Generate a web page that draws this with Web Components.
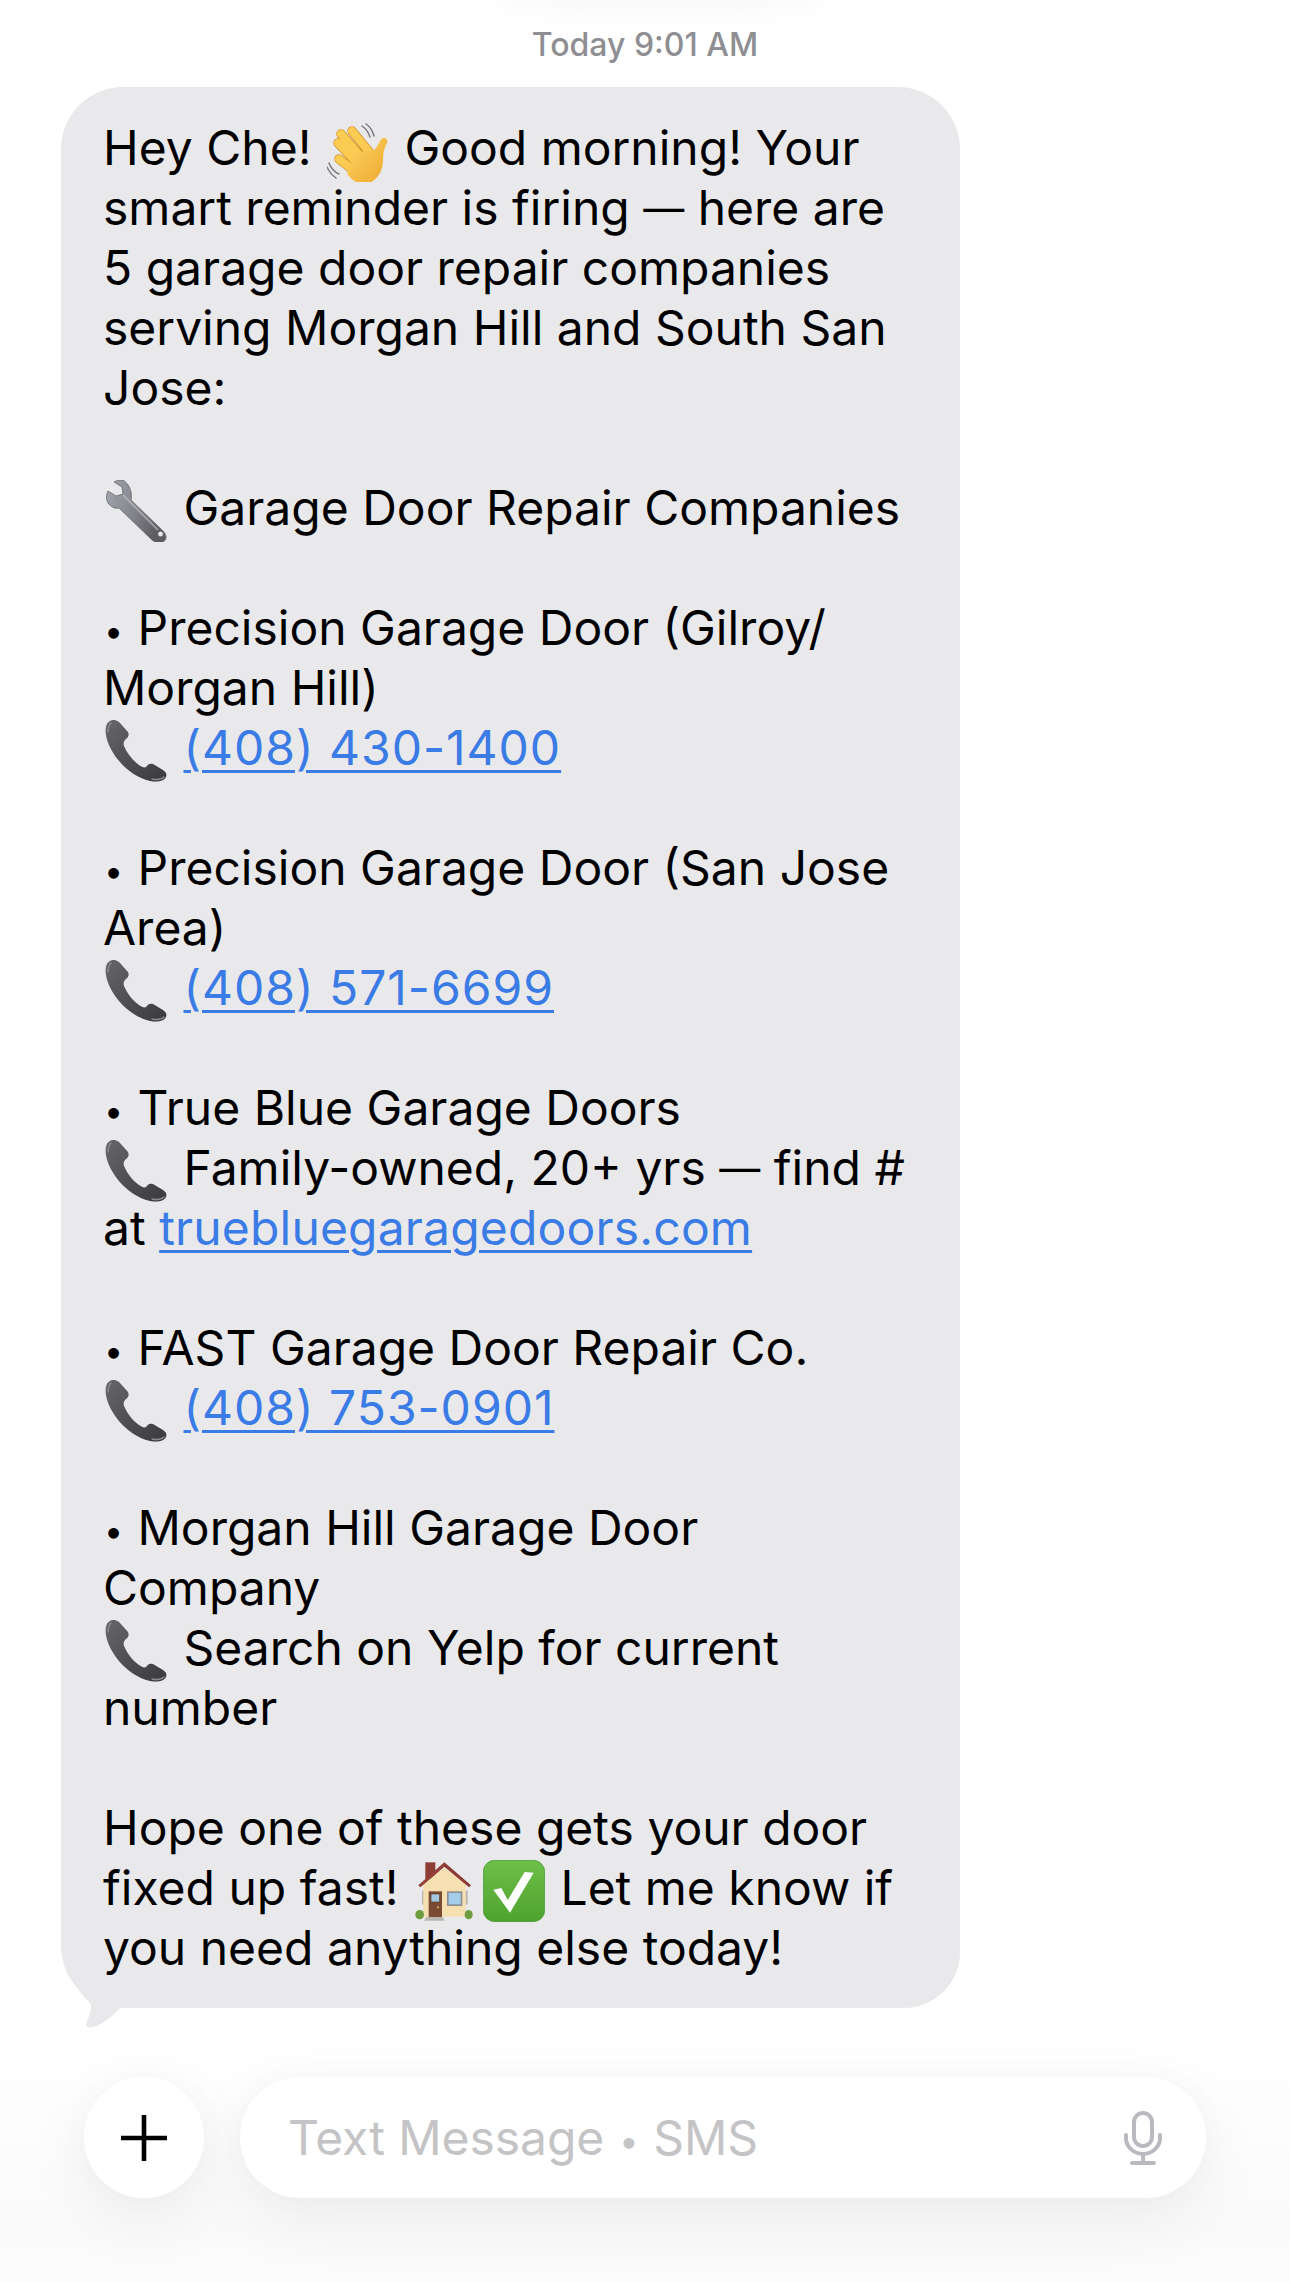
<!DOCTYPE html>
<html lang="en"><head><meta charset="utf-8"><title>Messages</title>
<style>
html,body{margin:0;padding:0;background:#fff}
body{font-family:Inter,"Liberation Sans",sans-serif;width:1290px;height:2282px;overflow:hidden}
</style></head><body>
<msg-thread>
  <msg-time>Today 9:01 AM</msg-time>
  <msg-bubble>Hey Che! <msg-emoji name="wave"></msg-emoji> Good morning! Your<br>smart reminder is firing <msg-dash>—</msg-dash> here are<br>5 garage door repair companies<br>serving Morgan Hill and South San<br>Jose:<br><br><msg-emoji name="wrench"></msg-emoji> Garage Door Repair Companies<br><br><msg-bullet>•</msg-bullet> Precision Garage Door (Gilroy/<br>Morgan Hill)<br><msg-emoji name="phone"></msg-emoji> <msg-link tel>(408) 430-1400</msg-link><br><br><msg-bullet>•</msg-bullet> Precision Garage Door (San Jose<br>Area)<br><msg-emoji name="phone"></msg-emoji> <msg-link tel>(408) 571-6699</msg-link><br><br><msg-bullet>•</msg-bullet> True Blue Garage Doors<br><msg-emoji name="phone"></msg-emoji> Family-owned, 20+ yrs <msg-dash>—</msg-dash> find #<br>at <msg-link>truebluegaragedoors.com</msg-link><br><br><msg-bullet>•</msg-bullet> FAST Garage Door Repair Co.<br><msg-emoji name="phone"></msg-emoji> <msg-link tel>(408) 753-0901</msg-link><br><br><msg-bullet>•</msg-bullet> Morgan Hill Garage Door<br>Company<br><msg-emoji name="phone"></msg-emoji> Search on Yelp for current<br>number<br><br>Hope one of these gets your door<br>fixed up fast! <msg-emoji name="house"></msg-emoji><msg-emoji name="check"></msg-emoji> Let me know if<br>you need anything else today!</msg-bubble>
  <msg-composer></msg-composer>
</msg-thread>
<script>
const ICONS={
wave:`<svg viewBox="18 3 62 62"><defs><linearGradient id="w" x1="0" y1="0" x2="1" y2="1"><stop offset="0" stop-color="#fdd663"/><stop offset="1" stop-color="#eda62e"/></linearGradient></defs>
<g fill="none" stroke="#77777c" stroke-width="1.5" stroke-linecap="round"><path d="M53 9q6 4 8 11"/><path d="M57 7q6 4 8 12"/><path d="M20 46q3 8 10 11"/><path d="M18 50q3 7 9 11"/></g>
<g fill="none" stroke-linecap="round"><g stroke="#d4912a" stroke-width="9.5"><path d="M43 14 61 36M32 17 53 41M29 26 49 47M30 42 48 56"/></g><g stroke="#fbcb52" stroke-width="8"><path d="M43 14 61 36M32 17 53 41M29 26 49 47M30 42 48 56"/></g></g>
<path d="M76 21c3 1 3 4 1 7-2 4-3 9-3 15 0 12-7 22-17 24-8 1-14-4-19-10l8-22 16-1c3 0 5-3 7-6 2-4 4-8 7-7z" fill="url(#w)"/></svg>`,
wrench:`<svg viewBox="15 17 62 62"><defs><linearGradient id="g" x1="0" y1="0" x2="1" y2="0.4"><stop offset="0" stop-color="#a3a6ae"/><stop offset=".55" stop-color="#85868d"/><stop offset="1" stop-color="#5d5c61"/></linearGradient></defs>
<path d="M31 17c-3 0-5 1-7 2l8 5 1 7-7 2-8-5c-2 4-2 8 0 12 3 4 7 6 11 5l32 31c2 2 7 6 12 3s3-8 0-11L41 37c1-5 0-11-3-15-2-3-4-5-7-5z" fill="url(#g)" stroke="#66666b" stroke-width=".8"/>
<path d="M33 32 68 67" stroke="#c0c2c8" stroke-width="2" opacity=".6"/>
<circle cx="70.500" cy="71" r="2.800" fill="#e8e8ea" stroke="#55555a" stroke-width=".7"/></svg>`,
phone:`<svg viewBox="0 0 62 62"><defs><linearGradient id="p" x1="0" y1="0" x2="1" y2="1"><stop offset="0" stop-color="#66666b"/><stop offset=".6" stop-color="#4a4a4f"/><stop offset="1" stop-color="#3a3a3e"/></linearGradient></defs>
<path d="M5 1C1 3 0 9 1 15c2 15 19 40 44 46 7 1 13 1 16-4 1-3 0-5-3-7L48 44c-3-1-5 0-7 3-2 1-4 0-7-2-7-5-12-12-15-19-1-3 0-5 2-7 3-2 3-5 2-7L15 3C12 0 8-1 5 1z" fill="url(#p)"/>
<path d="M6 3c-2 2-3 5-3 9M47 59c5 1 9 1 12-2" stroke="#8b8b90" stroke-width="1.4" fill="none" stroke-linecap="round"/></svg>`,
house:`<svg viewBox="45 48 178 186"><rect x="78" y="55" width="30" height="50" fill="#8d3d33"/>
<rect x="68" y="140" width="7" height="42" fill="#b9b5ae"/><rect x="198" y="140" width="7" height="42" fill="#b9b5ae"/>
<path d="M72 118 135 72l64 46v100H72z" fill="#f6dfb0"/>
<path d="M57 124 135 55l80 69-6 6-74-62-72 62z" fill="#8b3a34"/><path d="M62 124 135 60" stroke="#a9483e" stroke-width="3"/>
<rect x="88" y="142" width="40" height="77" fill="#7a4a33"/><rect x="95" y="150" width="26" height="24" fill="#a6c9e2" stroke="#5a3828" stroke-width="2"/><circle cx="116" cy="190" r="3" fill="#e6c05a"/>
<rect x="143" y="142" width="46" height="44" fill="#8b8f92"/><rect x="148" y="147" width="36" height="34" fill="#a3cdea"/>
<path d="M80 219h50l6 11H75z" fill="#b9b6ae"/>
<ellipse cx="61" cy="212" rx="13" ry="14" fill="#6e9c3f"/><ellipse cx="208" cy="212" rx="12" ry="14" fill="#6e9c3f"/></svg>`,
check:`<svg viewBox="249 47 186 186"><defs><linearGradient id="c" x1="0" y1="0" x2="0" y2="1"><stop offset="0" stop-color="#6dbf48"/><stop offset="1" stop-color="#4ea32f"/></linearGradient></defs>
<rect x="250" y="48" width="184" height="184" rx="34" fill="url(#c)" stroke="#3f8f2a" stroke-width="2"/>
<path d="M280 136l24-5 19 36 51-84 27 2-71 120z" fill="#fff"/></svg>`
};
const EMOJI_BOX={wave:[62,62,66],wrench:[62,62,67],phone:[62,62,67],house:[60,62,69],check:[62,62,66]};
function def(name,cls){customElements.define(name,cls)}
function shadow(el,html){const s=el.attachShadow({mode:'open'});s.innerHTML=html;return s}
const FONT='Inter,"Liberation Sans",sans-serif';
def('msg-thread',class extends HTMLElement{constructor(){super();shadow(this,`<style>:host{display:flex;flex-direction:column;width:1290px;height:2282px;position:relative;background:linear-gradient(#fff 0,#fff 2040px,#fafafa 2230px,#fcfcfc 100%);overflow:hidden;color:#000;font-family:${FONT}}
.top{position:absolute;left:490px;top:-30px;width:340px;height:40px;border-radius:50%;background:rgba(0,0,0,.03);filter:blur(14px)}</style><div class="top"></div><slot></slot>`)}});
def('msg-time',class extends HTMLElement{constructor(){super();shadow(this,`<style>:host{display:flex;justify-content:center;align-items:center;height:87px;box-sizing:border-box;padding-top:3px;font:500 32px/40px ${FONT};color:#8e8e93;white-space:pre;letter-spacing:0}</style><slot></slot>`)}});
def('msg-bubble',class extends HTMLElement{constructor(){super();shadow(this,`<style>:host{display:block;position:relative;box-sizing:border-box;margin-left:61px;width:899px;height:1921px;padding:31px 0 30px 42px;background:#e9e9eb;border-radius:62px 62px 56px 62px;font:400 48px/60px ${FONT};white-space:nowrap;color:#000}
svg{position:absolute;left:0;bottom:-20px;width:62px;height:64px;overflow:visible}</style><slot></slot><svg viewBox="0 0 62 64"><path d="M16 23C20 30 25 35 29 39 32 44 28 52 26 58 24 63 27 64 32 63 42 60 51 53 59 44L50 20z" fill="#e9e9eb"/></svg>`)}});
def('msg-bullet',class extends HTMLElement{constructor(){super();shadow(this,`<style>:host{display:inline-block;width:21px;text-align:center;font-size:34px;line-height:30px;vertical-align:2px}</style><slot></slot>`)}});
def('msg-dash',class extends HTMLElement{constructor(){super();shadow(this,`<style>:host{display:inline;font-size:41px;line-height:1;position:relative;top:-2px}</style><slot></slot>`)}});
def('msg-link',class extends HTMLElement{constructor(){super();shadow(this,`<style>:host{display:inline;color:#3a7be5;text-decoration:underline;text-decoration-thickness:3px;text-underline-offset:5px;letter-spacing:.18px}:host([tel]){letter-spacing:1px}</style><slot></slot>`)}});
def('msg-emoji',class extends HTMLElement{constructor(){super();const n=this.getAttribute('name');const [w,h,a]=EMOJI_BOX[n];shadow(this,`<style>:host{display:inline-block;width:${a}px;height:36px;vertical-align:-11px;position:relative}svg{position:absolute;left:2px;bottom:-6px;width:${w}px;height:${h}px}</style>${ICONS[n]}`)}});
def('msg-composer',class extends HTMLElement{constructor(){super();shadow(this,`<style>:host{display:flex;gap:36px;margin:69px 0 0 84px;width:1122px;height:121px}
.plus,.field{background:#fff;box-shadow:0 22px 70px rgba(0,0,0,.06),0 0 34px rgba(0,0,0,.025)}
.plus{width:120px;height:121px;border-radius:50%;display:flex;align-items:center;justify-content:center;flex:none}
.field{flex:1;border-radius:61px;display:flex;align-items:center;justify-content:space-between;padding:0 44px 0 48px;font:400 48px/60px ${FONT};color:#c4c4c6}
span{position:relative;top:2px;letter-spacing:-.05px}
i{font:inherit;font-style:normal;font-size:34px;vertical-align:2px;display:inline-block;width:22px;text-align:center}
</style><div class="plus"><svg width="46" height="46" viewBox="0 0 46 46"><path d="M23 1v44M1 23h44" stroke="#000" stroke-width="4.600" stroke-linecap="round"/></svg></div>
<div class="field"><span>Text Message <i>•</i> SMS</span><svg width="38" height="54" viewBox="0 0 38 54" fill="none" stroke="#b8bac0" stroke-width="4" stroke-linecap="round"><rect x="10" y="2" width="18" height="33" rx="9"/><path d="M2 24v3c0 9 8 16 17 16s17-7 17-16v-3M19 43v8M8 52h22"/></svg></div>`)}});
</script>
</body></html>
